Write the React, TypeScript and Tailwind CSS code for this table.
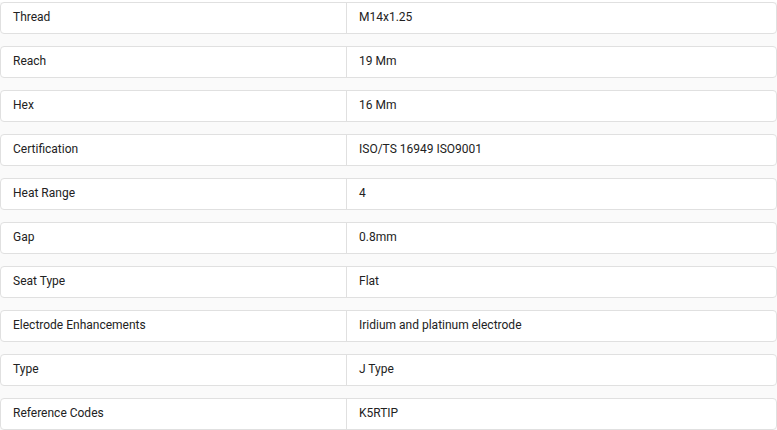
const specs: [string, string][] = [
  ['Thread', 'M14x1.25'],
  ['Reach', '19 Mm'],
  ['Hex', '16 Mm'],
  ['Certification', 'ISO/TS 16949 ISO9001'],
  ['Heat Range', '4'],
  ['Gap', '0.8mm'],
  ['Seat Type', 'Flat'],
  ['Electrode Enhancements', 'Iridium and platinum electrode'],
  ['Type', 'J Type'],
  ['Reference Codes', 'K5RTIP'],
];

export default function App() {
  return (
    <div className="w-[777px] h-[430px] bg-white pt-[2px] font-['Roboto',sans-serif] text-[12px] text-[#222]">
      <div className="flex flex-col gap-3 bg-[#fafafa]">
        {specs.map(([label, value]) => (
          <div
            key={label}
            className="flex h-8 items-stretch rounded border border-[#e0e0e0] bg-white"
          >
            <div className="flex w-[346px] items-center border-r border-[#e0e0e0] pb-[2px] pl-3">
              {label}
            </div>
            <div className="flex flex-1 items-center pb-[2px] pl-3">{value}</div>
          </div>
        ))}
      </div>
    </div>
  );
}
